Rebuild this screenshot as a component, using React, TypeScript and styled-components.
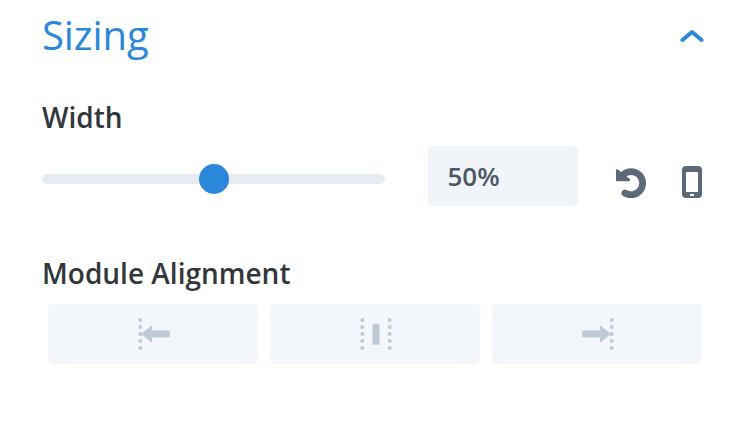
import React from "react";
import styled, { createGlobalStyle } from "styled-components";

const GlobalStyle = createGlobalStyle`
  * { box-sizing: border-box; }
  body { margin: 0; background: #fff; font-family: "Open Sans", "Noto Sans", sans-serif; }
`;

const Panel = styled.section`
  width: 750px;
  height: 424px;
  padding: 0 42px;
  display: flex;
  flex-direction: column;
  overflow: hidden;
  background: #fff;
`;

const Header = styled.header`
  height: 72px;
  display: flex;
  align-items: center;
  justify-content: space-between;
  padding-right: 4px;
`;

const Title = styled.h2`
  margin: 0 0 2px;
  font-size: 40px;
  line-height: 54px;
  letter-spacing: -0.1px;
  font-weight: 400;
  color: #2b87da;
`;

const Label = styled.h3<{ $top: number }>`
  margin: ${(p) => p.$top}px 0 0;
  padding-bottom: 2px;
  font-size: 28px;
  line-height: 34px;
  font-weight: 600;
  color: #32373c;
`;

const WidthRow = styled.div`
  height: 60px;
  margin-top: 10px;
  display: flex;
  align-items: center;
`;

const Track = styled.div`
  width: 343px;
  height: 10px;
  margin-top: 6px;
  border-radius: 5px;
  background: #e5ecf3;
  display: flex;
  align-items: center;
  justify-content: center;
`;

const Thumb = styled.span`
  width: 30px;
  height: 30px;
  border-radius: 50%;
  background: #2b87da;
`;

const ValueInput = styled.div`
  width: 150px;
  height: 60px;
  margin-left: 43px;
  padding: 1px 0 0 19.5px;
  border-radius: 5px;
  background: #f1f4f9;
  font-size: 26px;
  line-height: 58px;
  font-weight: 600;
  color: #4c5866;
`;

const Actions = styled.div`
  display: flex;
  gap: 36px;
  margin: 12px 0 0 38px;
`;

const Icon = styled.svg`
  display: block;
  flex: none;
`;

const Options = styled.div`
  display: grid;
  grid-template-columns: repeat(3, 210px);
  gap: 12px;
  margin: 12px 0 0 6px;
`;

const Option = styled.button`
  height: 60px;
  padding: 0;
  border: 0;
  border-radius: 5px;
  background: #f3f6fb;
  color: #bec9d6;
  display: flex;
  align-items: center;
  justify-content: center;
`;

const Dots = ({ x }: { x: number }) => (
  <>
    {[2, 9, 16, 23, 30].map((y) => (
      <circle key={y} cx={x} cy={y} r="2" />
    ))}
  </>
);

const ArrowToLine = ({ flipped = false }: { flipped?: boolean }) => (
  <Icon width="34" height="32" viewBox="0 0 34 32" fill="currentColor">
    <g transform={flipped ? "translate(36 0) scale(-1 1)" : undefined}>
      <Dots x={4.3} />
      <path d="M5 16 16 7.2v5.3h15.8a2 2 0 0 1 2 2v3a2 2 0 0 1-2 2H16v5.3z" />
    </g>
  </Icon>
);

const CenterIcon = () => (
  <Icon width="34" height="32" viewBox="0 0 34 32" fill="currentColor">
    <Dots x={4.3} />
    <Dots x={31.7} />
    <rect x="14.5" y="5.7" width="7" height="21" rx="1.5" />
  </Icon>
);

export default function App() {
  return (
    <>
      <GlobalStyle />
      <Panel>
        <Header>
          <Title>Sizing</Title>
          <Icon width="26" height="16" viewBox="0 0 26 16" fill="none" stroke="#2b87da" strokeWidth="4" strokeLinecap="round" strokeLinejoin="round">
            <path d="M4.5 12 14 4l9.5 8" />
          </Icon>
        </Header>
        <Label $top={28}>Width</Label>
        <WidthRow>
          <Track>
            <Thumb />
          </Track>
          <ValueInput>50%</ValueInput>
          <Actions>
            <Icon width="30" height="32" viewBox="0 0 30 32">
              <path d="M7.2 8.6A11.6 11.6 0 1 1 8.9 27" fill="none" stroke="#5c6978" strokeWidth="6.8" strokeLinecap="round" />
              <path d="M0 3.4Q2 3 4.5 5.5L8 8.5l5.4 4Q15 15 13 15.3H0z" fill="#5c6978" />
            </Icon>
            <Icon width="20" height="32" viewBox="0 0 20 32">
              <rect width="20" height="32" rx="4" fill="#5c6978" />
              <rect x="4" y="6" width="12" height="20" fill="#fff" />
              <rect x="8" y="28" width="4" height="2" rx=".5" fill="#fff" />
            </Icon>
          </Actions>
        </WidthRow>
        <Label $top={50}>Module Alignment</Label>
        <Options>
          <Option aria-label="Align left"><ArrowToLine /></Option>
          <Option aria-label="Align center"><CenterIcon /></Option>
          <Option aria-label="Align right"><ArrowToLine flipped /></Option>
        </Options>
      </Panel>
    </>
  );
}
